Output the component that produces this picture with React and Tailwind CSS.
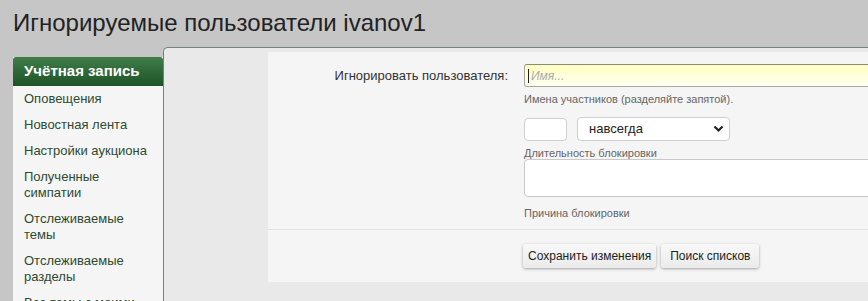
import React from "react";

const font = { fontFamily: '"Liberation Sans", Arial, sans-serif' };

function SideItem({ children }) {
  return (
    <div className="shrink-0 px-[11px] py-[5px] text-[13px] leading-4 text-[#2d4a30]">{children}</div>
  );
}

export default function App() {
  return (
    <div
      className="w-[868px] h-[301px] overflow-hidden bg-[#c6c6c6]"
      style={font}
    >
      <h1 className="pt-[11px] pl-[13px] text-[24px] leading-6 text-[#222] font-normal">
        Игнорируемые пользователи ivanov1
      </h1>
      <div className="mt-[12px] flex items-stretch h-[260px]">
        <div className="ml-[13px] mt-[10px] w-[150px] shrink-0 bg-[#f5f5f5] flex flex-col overflow-hidden">
          <div className="shrink-0 h-[29px] rounded-t-[3px] bg-gradient-to-b from-[#417d4b] to-[#1d5426] px-[11px] flex items-center text-[15px] font-bold text-white">
            Учётная запись
          </div>
          <SideItem>Оповещения</SideItem>
          <SideItem>Новостная лента</SideItem>
          <SideItem>Настройки аукциона</SideItem>
          <SideItem>Полученные симпатии</SideItem>
          <SideItem>Отслеживаемые темы</SideItem>
          <SideItem>Отслеживаемые разделы</SideItem>
          <SideItem>Все темы с моими сообщениями</SideItem>
        </div>
        <div className="flex-1 min-w-0 bg-[#e9e9e9] border-t border-l border-[#6f8474] rounded-tl-[5px] pt-[4px] pl-[104px]">
          <div className="bg-[#f5f5f5] h-[230px] flex flex-col">
            <div className="flex pt-[12px]">
              <div className="w-[256px] shrink-0 pr-[16px] text-right text-[13px] text-[#333] leading-[23px]">
                Игнорировать пользователя:
              </div>
              <div className="flex flex-col">
                <div className="w-[400px] h-[23px] rounded-[3px] border border-[#a8a8a0] border-t-[#8a8a80] bg-gradient-to-b from-[#ffffc0] to-[#fffff2] flex items-center pl-[3px]">
                  <span className="w-px h-[14px] bg-[#222] mr-[2px]"></span>
                  <span className="text-[12px] italic text-[#aaa]">Имя...</span>
                </div>
                <div className="mt-[5px] text-[11px] leading-[14px] text-[#666]">
                  Имена участников (разделяйте запятой).
                </div>
                <div className="mt-[11px] flex items-center gap-[10px]">
                  <div className="w-[43px] h-[23px] rounded-[4px] border border-[#cfcfcf] bg-white"></div>
                  <div className="w-[153px] h-[24px] rounded-[4px] border border-[#cfcfcf] bg-white flex items-center justify-between pl-[11px] pr-[5px]">
                    <span className="text-[13px] text-[#222]">навсегда</span>
                    <svg width="11" height="8" viewBox="0 0 11 8">
                      <path d="M1.5 1.5 L5.5 5.5 L9.5 1.5" fill="none" stroke="#222" strokeWidth="2.2" />
                    </svg>
                  </div>
                </div>
                <div className="mt-[5px] text-[11px] leading-[14px] text-[#666]">
                  Длительность блокировки
                </div>
                <div className="w-[400px] h-[38px] rounded-[4px] border border-[#c8c8c8] bg-white mt-[-1px]"></div>
                <div className="mt-[9px] text-[11px] leading-[14px] text-[#666]">
                  Причина блокировки
                </div>
              </div>
            </div>
            <div className="mt-[9px] border-t border-[#e2e2e2] flex pt-[14px] pl-[255px] gap-[5px]">
              <button className="h-[24px] px-[5px] rounded-[3px] bg-gradient-to-b from-[#f8f8f8] to-[#ebebeb] shadow-[0_1px_3px_rgba(0,0,0,0.35)] text-[12px] text-[#222]">
                Сохранить изменения
              </button>
              <button className="h-[24px] px-[9px] rounded-[3px] bg-gradient-to-b from-[#f8f8f8] to-[#ebebeb] shadow-[0_1px_3px_rgba(0,0,0,0.35)] text-[12px] text-[#222]">
                Поиск списков
              </button>
            </div>
          </div>
        </div>
      </div>
    </div>
  );
}
